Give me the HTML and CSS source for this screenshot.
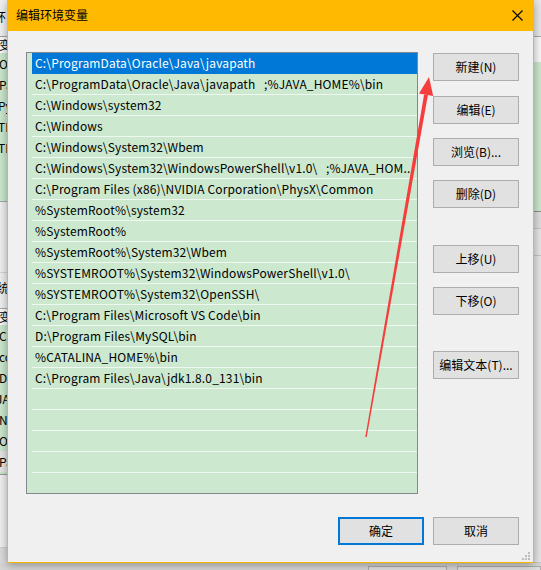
FILE: index.html
```html
<!DOCTYPE html>
<html lang="zh-CN">
<head>
<meta charset="utf-8">
<title>编辑环境变量</title>
<link rel="stylesheet" href="styles.css">
</head>
<body>
<div class="desktop">
  <div class="backwin back-left">
    <div class="bl-title"><span class="bl-text">环</span></div>
    <div class="bl-colhead"><span class="bl-text">变</span></div>
    <div class="bl-list">
      <div class="bl-row"><span class="bl-text">O</span></div>
      <div class="bl-row"><span class="bl-text">Pa</span></div>
      <div class="bl-row"><span class="bl-text cut2">Py</span></div>
      <div class="bl-row"><span class="bl-text cut2">TE</span></div>
      <div class="bl-row"><span class="bl-text cut2">TM</span></div>
    </div>
    <div class="bl-gap"></div>
    <div class="bl-label"><span class="bl-text cut5">统</span></div>
    <div class="bl-colhead"><span class="bl-text">变</span></div>
    <div class="bl-list bl-list2">
      <div class="bl-row"><span class="bl-text">Co</span></div>
      <div class="bl-row"><span class="bl-text">co</span></div>
      <div class="bl-row"><span class="bl-text">Dr</span></div>
      <div class="bl-row"><span class="bl-text cut4">JA</span></div>
      <div class="bl-row"><span class="bl-text">N</span></div>
      <div class="bl-row"><span class="bl-text">O</span></div>
      <div class="bl-row bl-row-off"><span class="bl-text">Pa</span></div>
    </div>
    <div class="bl-bottom"></div>
  </div>

  <div class="backwin back-right">
    <div class="br-top"></div>
    <div class="br-head"></div>
    <div class="br-list"></div>
    <div class="br-band br-band1"></div>
    <div class="br-band br-band2"></div>
    <div class="br-band br-band3"></div>
  </div>

  <div class="backwin back-bottom">
    <div class="bb-btn"></div>
    <div class="bb-btn bb-btn2"></div>
  </div>

  <div class="dialog">
    <div class="titlebar">
      <span class="title">编辑环境变量</span>
      <svg class="close" width="11" height="11" viewBox="0 0 11 11">
        <path d="M0.5 0.5 L10.5 10.5 M10.5 0.5 L0.5 10.5" stroke="#000" stroke-width="1.1" fill="none"/>
      </svg>
    </div>
    <div class="content">
      <div class="listbox">
        <div class="row selected">C:\ProgramData\Oracle\Java\javapath</div>
        <div class="row">C:\ProgramData\Oracle\Java\javapath   ;%JAVA_HOME%\bin</div>
        <div class="row">C:\Windows\system32</div>
        <div class="row">C:\Windows</div>
        <div class="row">C:\Windows\System32\Wbem</div>
        <div class="row">C:\Windows\System32\WindowsPowerShell\v1.0\   ;%JAVA_HOM...</div>
        <div class="row">C:\Program Files (x86)\NVIDIA Corporation\PhysX\Common</div>
        <div class="row">%SystemRoot%\system32</div>
        <div class="row">%SystemRoot%</div>
        <div class="row">%SystemRoot%\System32\Wbem</div>
        <div class="row">%SYSTEMROOT%\System32\WindowsPowerShell\v1.0\</div>
        <div class="row">%SYSTEMROOT%\System32\OpenSSH\</div>
        <div class="row">C:\Program Files\Microsoft VS Code\bin</div>
        <div class="row">D:\Program Files\MySQL\bin</div>
        <div class="row">%CATALINA_HOME%\bin</div>
        <div class="row">C:\Program Files\Java\jdk1.8.0_131\bin</div>
        <div class="row"></div>
        <div class="row"></div>
        <div class="row"></div>
        <div class="row"></div>
        <div class="row"></div>
      </div>
      <div class="side">
        <button class="btn">新建(N)</button>
        <button class="btn first-gap">编辑(E)</button>
        <button class="btn">浏览(B)...</button>
        <button class="btn">删除(D)</button>
        <button class="btn group-gap">上移(U)</button>
        <button class="btn">下移(O)</button>
        <button class="btn group-gap2">编辑文本(T)...</button>
      </div>
    </div>
    <div class="footer">
      <button class="btn default">确定</button>
      <button class="btn">取消</button>
    </div>
    <svg class="grip" width="9" height="9" viewBox="0 0 9 9">
      <rect x="6" y="0" width="2" height="2" fill="#bdbdbd"/>
      <rect x="3" y="3" width="2" height="2" fill="#bdbdbd"/>
      <rect x="6" y="3" width="2" height="2" fill="#bdbdbd"/>
      <rect x="0" y="6" width="2" height="2" fill="#bdbdbd"/>
      <rect x="3" y="6" width="2" height="2" fill="#bdbdbd"/>
      <rect x="6" y="6" width="2" height="2" fill="#bdbdbd"/>
    </svg>
  </div>

  <svg class="arrow" width="541" height="570" viewBox="0 0 541 570">
    <polygon points="427.9,95.0 424.1,94.4 365.3,436.9 366.7,437.1" fill="#f53d3d"/>
    <polygon points="429,77 433.2,96 419,93.4" fill="#f53d3d"/>
  </svg>
</div>
</body>
</html>
```

FILE: styles.css
```css
* {
  box-sizing: border-box;
}

html,
body {
  margin: 0;
  padding: 0;
}

body {
  width: 541px;
  height: 570px;
  overflow: hidden;
  background: #dcdcdc;
  font-family: "Noto Sans CJK SC", "Microsoft YaHei", sans-serif;
  font-size: 12px;
  color: #000;
}

.desktop {
  position: relative;
  width: 541px;
  height: 570px;
  overflow: hidden;
}

/* ---------- background windows ---------- */
.backwin {
  position: absolute;
  overflow: hidden;
}

.back-left {
  left: 0;
  top: 0;
  width: 8px;
  height: 548px;
  background: #f0f0f0;
  display: flex;
  flex-direction: column;
  border-bottom: 1px solid #cfcfcf;
}

.bl-text {
  display: block;
  white-space: nowrap;
  line-height: 21px;
  margin-left: -1px;
}

.bl-text.cut2 {
  margin-left: -2px;
}

.bl-text.cut4 {
  margin-left: -4px;
}

.bl-text.cut5 {
  margin-left: -3px;
}

.bl-title {
  height: 37px;
  border-bottom: 1px solid #a0a0a0;
  padding-top: 6px;
}

.bl-title .bl-text {
  margin-left: -6px;
}

.bl-colhead {
  height: 16px;
  background: #fafafa;
  line-height: 16px;
}

.bl-colhead .bl-text {
  line-height: 16px;
}

.bl-list {
  height: 149px;
  background: #cce8cf;
  border-bottom: 1px solid #a8a8a8;
}

.bl-row {
  height: 21px;
}

.bl-gap {
  height: 71px;
  border-bottom: 1px solid #d4d4d4;
}

.bl-label {
  height: 36px;
  padding-top: 4px;
  border-bottom: 1px solid #a8a8a8;
}

.bl-list2 {
  height: 150px;
  border-bottom: 1px solid #9a9a9a;
}

.bl-list2 .bl-row-off {
  background: #e6e6e6;
}

.bl-bottom {
  flex: 1;
}

.back-right {
  left: 534px;
  top: 0;
  width: 7px;
  height: 563px;
  background: #e8e8e8;
  display: flex;
  flex-direction: column;
}

.br-top {
  height: 37px;
  border-bottom: 1px solid #a8a8a8;
}

.br-head {
  height: 25px;
  background: #f8f8f8;
}

.br-list {
  height: 150px;
  background: #cce8cf;
  border-bottom: 1px solid #8e8e8e;
}

.br-band {
  border-bottom: 1px solid #c6c6c6;
}

.br-band1 {
  height: 17px;
  background: #dedede;
}

.br-band2 {
  height: 27px;
  background: #e6e6e6;
}

.br-band3 {
  flex: 1;
  background: #e6e6e6;
}

.back-bottom {
  left: 0;
  top: 563px;
  width: 541px;
  height: 7px;
  background: #d6d6d6;
  display: flex;
  padding-left: 368px;
  padding-top: 3px;
  gap: 10px;
}

.bb-btn {
  width: 85px;
  height: 10px;
  border: 1px solid #adadad;
  background: #e1e1e1;
}

.bb-btn2 {
  width: 90px;
}

/* ---------- dialog ---------- */
.dialog {
  position: absolute;
  left: 7px;
  top: 0;
  width: 527px;
  height: 563px;
  background: #f0f0f0;
  border: 1px solid #f6b700;
  border-top: none;
  display: flex;
  flex-direction: column;
  box-shadow: 0 2px 9px rgba(0, 0, 0, 0.35);
}

.titlebar {
  height: 31px;
  margin: 0 -1px;
  background: #ffb900;
  display: flex;
  align-items: center;
  justify-content: space-between;
  padding: 0 11px 0 9px;
}

.title {
  font-size: 12px;
  line-height: 16px;
  margin-top: -1px;
}

.close {
  display: block;
  margin-top: -1px;
}

.content {
  display: flex;
  gap: 15px;
  padding: 21px 14px 0 18px;
}

.listbox {
  width: 392px;
  height: 442px;
  border: 1px solid #828790;
  background: #cce8cf;
  overflow: hidden;
}

.row {
  height: 21px;
  margin-left: 5px;
  padding-left: 3px;
  border-bottom: 1px solid #eef7f0;
  line-height: 20px;
  letter-spacing: 0.15px;
  white-space: pre;
  overflow: hidden;
}

.row.selected {
  background: #0078d7;
  color: #fff;
  border-bottom-color: #0078d7;
}

.side {
  width: 86px;
  display: flex;
  flex-direction: column;
  gap: 14px;
  padding-top: 1px;
}

.btn {
  width: 86px;
  height: 28px;
  padding: 0;
  margin: 0;
  border: 1px solid #adadad;
  background: #e1e1e1;
  font-family: "Noto Sans CJK SC", "Microsoft YaHei", sans-serif;
  font-size: 12px;
  color: #000;
  line-height: 16px;
  text-align: center;
}

.btn.first-gap {
  margin-top: 1px;
}

.btn.group-gap {
  margin-top: 23px;
}

.btn.group-gap2 {
  margin-top: 22px;
}

.btn.default {
  border: 2px solid #0078d7;
}

.footer {
  display: flex;
  justify-content: flex-end;
  gap: 9px;
  padding-right: 14px;
  margin-top: 23px;
}

.grip {
  position: absolute;
  right: 2px;
  bottom: 1px;
}

.arrow {
  position: absolute;
  left: 0;
  top: 0;
  pointer-events: none;
}
```
